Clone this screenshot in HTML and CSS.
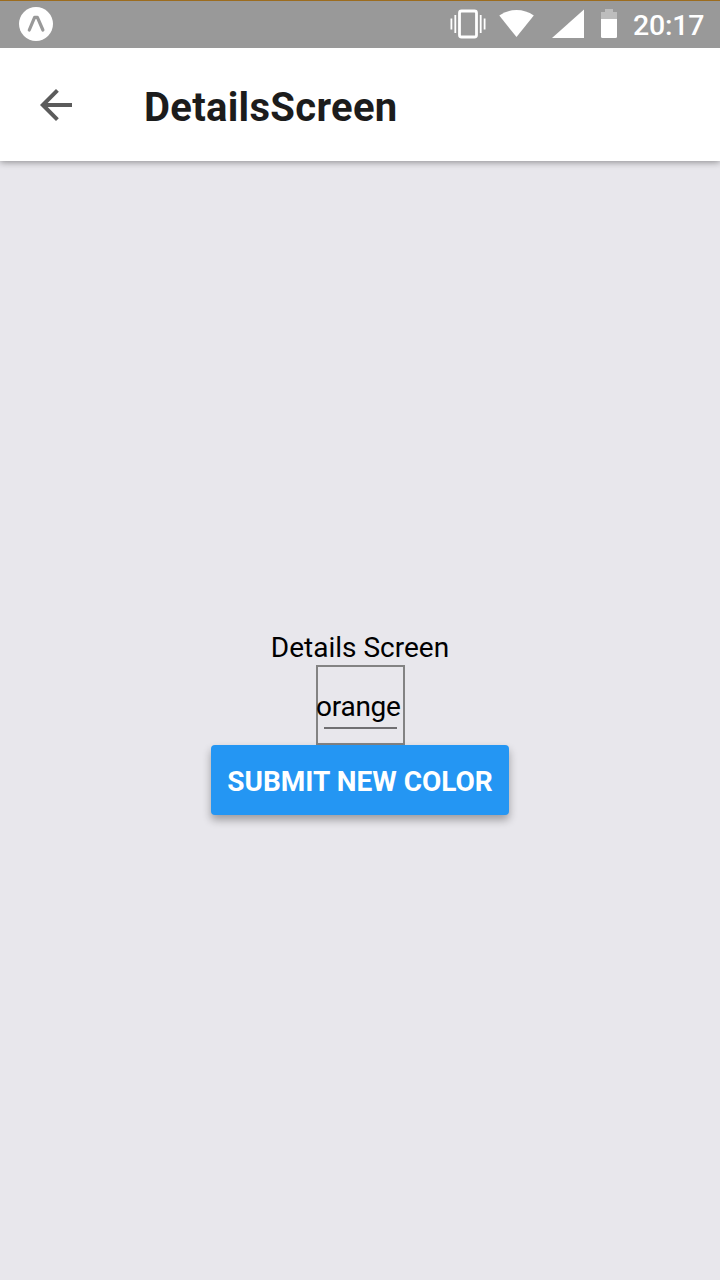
FILE: index.html
```html
<!DOCTYPE html>
<html lang="en">
<head>
<meta charset="utf-8">
<title>DetailsScreen</title>
<link rel="stylesheet" href="styles.css">
</head>
<body>
<div class="status">
  <svg class="logo" width="34" height="34" viewBox="0 0 34 34"><circle cx="17" cy="17" r="17" fill="#fff"/><path d="M10.3 23 15.6 10.4h2.8L23.9 23" fill="none" stroke="#999" stroke-width="3.2" stroke-linecap="round" stroke-linejoin="round"/></svg>
  <svg class="icons" width="168" height="46" viewBox="450 1 168 46" fill="#fff">
    <rect x="459.5" y="11" width="17" height="26" rx="2" fill="none" stroke="#fff" stroke-width="2.8"/>
    <path d="M451.4 18.5v11M455.3 15v18M480.7 15v18M484.6 18.5v11" stroke="#fff" stroke-width="1.8"/>
    <path d="M516.5 37 499.3 15.5Q507 10 516.5 10T533.8 15.5Z"/>
    <path d="M552 38h32V9.5Z"/>
    <path d="M601 19v-7h4V9h8v3h4v7Z" fill="#bdbdbd"/>
    <path d="M601 19h16v17.5q0 1.5-1.5 1.5h-13q-1.5 0-1.5-1.5Z"/>
  </svg>
  <span class="time">20:17</span>
</div>
<header class="header">
  <svg class="back" width="32" height="32" viewBox="0 0 32 32" fill="none" stroke="#5b5b5b" stroke-width="4"><path d="M32 16H3M17.4 1.4 2.8 16l14.6 14.6"/></svg>
  <h1 class="title">DetailsScreen</h1>
</header>
<main class="main">
  <div class="label">Details Screen</div>
  <div class="field"><div class="value">orange</div><div class="underline"></div></div>
  <button class="submit">SUBMIT NEW COLOR</button>
</main>
</body>
</html>
```
FILE: styles.css
```css
* { box-sizing: border-box; }
body {
  margin: 0;
  height: 1280px;
  display: flex;
  flex-direction: column;
  background: #e8e7ec;
  font-family: Roboto, sans-serif;
  color: #000;
  overflow: hidden;
}
.status {
  flex: none;
  z-index: 1;
  height: 48px;
  display: flex;
  align-items: center;
  padding: 0 16px 1px 19px;
  background: #999;
  border-top: 1px solid #9c6c1e;
}
.logo { flex: none; }
.icons { flex: none; margin-left: auto; }
.time {
  width: 71px;
  margin-left: 15px;
  font-size: 28.5px;
  letter-spacing: -.2px;
  font-weight: 500;
  line-height: 34px;
  color: #fff;
  padding-top: 3px;
}
.header {
  flex: none;
  height: 113px;
  display: flex;
  align-items: center;
  padding-left: 40px;
  background: #fff;
  box-shadow: 0 1px 7px rgba(0, 0, 0, .42);
}
.back { flex: none; }
.title {
  margin: 7px 0 0 72px;
  font-size: 40px;
  letter-spacing: .3px;
  line-height: 48px;
  font-weight: 700;
  color: #1c1c1c;
}
.main {
  flex: 1;
  display: flex;
  flex-direction: column;
  align-items: center;
  justify-content: center;
}
.label {
  height: 39px;
  font-size: 28px;
  line-height: 43px;
}
.field {
  width: 89px;
  height: 80px;
  margin-left: 1px;
  border: 2px solid #838383;
  padding-top: 20px;
}
.value {
  margin-left: -2px;
  font-size: 28px;
  letter-spacing: -.25px;
  line-height: 40px;
  height: 40px;
}
.underline {
  width: 73px;
  height: 2px;
  margin-left: 6px;
  background: #706f72;
}
.submit {
  width: 298px;
  height: 70px;
  border: 0;
  border-radius: 4px;
  padding: 4px 0 0;
  background: #2496f3;
  color: #fff;
  font: 700 28px/34px Roboto, sans-serif;
  white-space: nowrap;
  box-shadow: 0 5px 8px rgba(0, 0, 0, .32);
}
```
